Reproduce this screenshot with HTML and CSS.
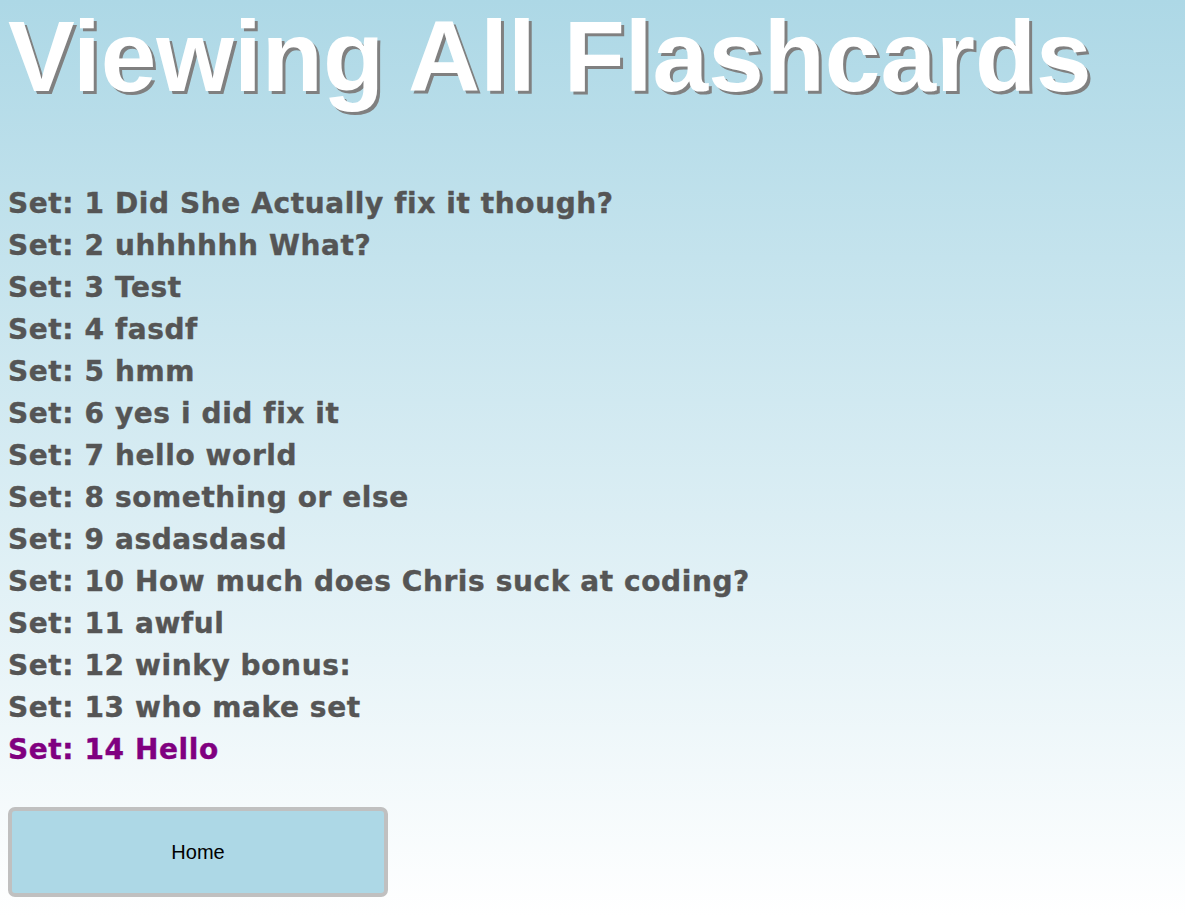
FILE: index.html
```html
<!DOCTYPE html>
<html>
<head>
<meta charset="utf-8">
<title>Viewing All Flashcards</title>
<link rel="stylesheet" href="styles.css">
</head>
<body>
<h1 class="title">Viewing All Flashcards</h1>
<ul class="sets">
  <li><a class="set" href="#s1">Set: 1 Did She Actually fix it though?</a></li>
  <li><a class="set" href="#s2">Set: 2 uhhhhhh What?</a></li>
  <li><a class="set" href="#s3">Set: 3 Test</a></li>
  <li><a class="set" href="#s4">Set: 4 fasdf</a></li>
  <li><a class="set" href="#s5">Set: 5 hmm</a></li>
  <li><a class="set" href="#s6">Set: 6 yes i did fix it</a></li>
  <li><a class="set" href="#s7">Set: 7 hello world</a></li>
  <li><a class="set" href="#s8">Set: 8 something or else</a></li>
  <li><a class="set" href="#s9">Set: 9 asdasdasd</a></li>
  <li><a class="set" href="#s10">Set: 10 How much does Chris suck at coding?</a></li>
  <li><a class="set" href="#s11">Set: 11 awful</a></li>
  <li><a class="set" href="#s12">Set: 12 winky bonus:</a></li>
  <li><a class="set" href="#s13">Set: 13 who make set</a></li>
  <li><a class="set visited" href="#s14">Set: 14 Hello</a></li>
</ul>
<button class="home" type="button">Home</button>
</body>
</html>
```
FILE: styles.css
```css
html {
  min-height: 100%;
  background: linear-gradient(to bottom, #add8e6 0%, #ffffff 100%);
}
body {
  margin: 0;
  padding: 0 8px;
  min-height: 917px;
  box-sizing: border-box;
  font-family: "Liberation Sans", Arial, sans-serif;
}
.title {
  margin: 0;
  font-size: 100px;
  font-weight: bold;
  line-height: 112px;
  color: #ffffff;
  text-shadow: 3px 3px 0 #808080;
}
.sets {
  list-style: none;
  margin: 71px 0 0;
  padding: 0;
}
.set {
  display: block;
  font-family: "DejaVu Sans", "Liberation Sans", sans-serif;
  font-size: 28px;
  font-weight: bold;
  line-height: 42px;
  letter-spacing: 0.6px;
  color: #555555;
  -webkit-text-stroke: 0.4px currentColor;
  text-decoration: none;
}
.set.visited {
  color: #800080;
}
.home {
  display: block;
  margin-top: 36px;
  width: 380px;
  height: 90px;
  background: #add8e6;
  border: 4px solid #c0c0c0;
  border-radius: 7px;
  font-family: "Liberation Sans", Arial, sans-serif;
  font-size: 20px;
  color: #000000;
}
```
